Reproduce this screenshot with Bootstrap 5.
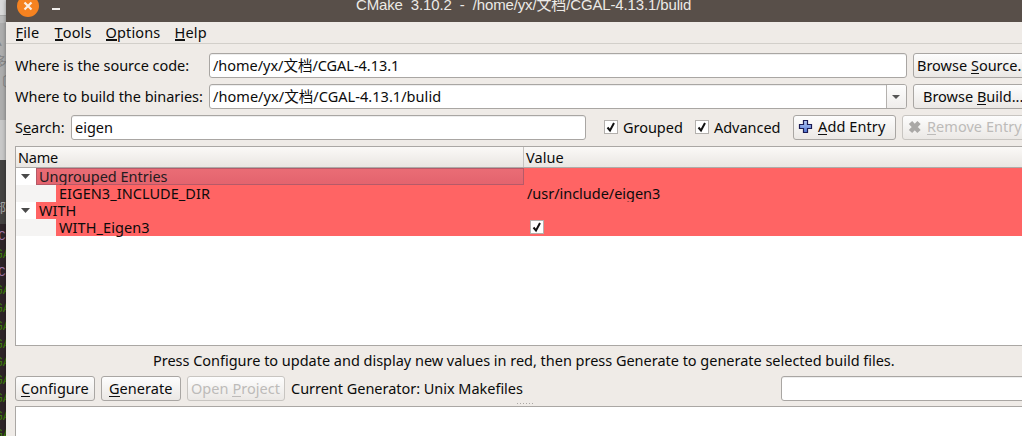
<!DOCTYPE html>
<html lang="zh-CN">
<head>
<meta charset="utf-8">
<title>CMake 3.10.2</title>
<link href="https://cdn.jsdelivr.net/npm/bootstrap@5.3.0/dist/css/bootstrap.min.css" rel="stylesheet">
<script src="https://cdn.jsdelivr.net/npm/bootstrap@5.3.0/dist/js/bootstrap.bundle.min.js"></script>
<style>
body{width:1022px;height:436px;font:14.5px/20px "Noto Sans","Noto Sans CJK SC",sans-serif;letter-spacing:-.03px;color:#0b0b0b;background:#efebe7;white-space:nowrap}
u{text-decoration:none;box-shadow:0 -1px 0 #111 inset;display:inline-block;height:18px;line-height:20px;margin-bottom:-3px;vertical-align:top}
/* desktop visible left of the window */
.desk{width:6px;flex:none;background:#2e2428;font:13px/18px "Liberation Mono","Noto Sans CJK SC",monospace}
.desk-top{height:160px;background:linear-gradient(#d9d9d9 0 15px,#aaa 15px 16px,#bcbcbc 16px 23px,#adadad 23px 120px,#c8c8c8 120px);color:#858585;padding-top:34px}
.desk-top div{height:20px;margin-left:-6px}
.desk-mid{height:68px;background:linear-gradient(#454341 64px,#2e2428 64px);color:#aaa;padding-top:40px}
.desk-mid div{margin-left:-7px}
.desk .g{color:#3d7a0b;margin-left:-5px}
.desk .p{color:#a477a6;margin-left:-2px}
.win{width:1016px;box-shadow:0 0 4px rgba(0,0,0,.4)}
.titlebar{height:22px;background:#584f49;color:#eceae6;font:15px/20px "Liberation Sans","Noto Sans CJK SC",sans-serif;letter-spacing:-.14px;white-space:pre}
.titlebar .cap{margin:-5px 0 0 350px}
.titlebar svg{left:0;top:0}
.menus{height:22px;border-bottom:1px solid #d2cfca;padding-left:9.5px;letter-spacing:.15px}
.menus u{box-shadow:0 -2px 0 #111 inset;height:19px}
.m1{width:39px}.m2{width:51px}.m3{width:69px}
.frm{padding-left:9px}
.frm>*{flex:none}
.frm>div:not(.fld):not(.chk),.frm>span{margin-top:-2px}
.frm>.chk{margin-top:-1px}
.r1{margin-top:9px}.r2{margin-top:6px}
.fld{height:25px;background:#fff;border:1px solid #a9a6a3;border-radius:3px;box-shadow:inset 0 1px #eee;padding-left:3px;line-height:22px}
.b{height:25px;padding:0 0 0 4px;border:1px solid #a9a6a3;border-radius:3px;background:linear-gradient(#fdfdfd,#ebe8e5);font-size:inherit;line-height:21px;color:#0b0b0b;text-align:left}
.b.off{color:#bdbbb9;border-color:#c8c5c1}
.b u{line-height:21px;height:19px}
.b.off u{box-shadow:0 -1px 0 #bdbbb9 inset}
.wide{width:130px;padding-left:3px}.bb{padding-left:9px}
.conf{width:80px;padding-left:5px}.gen{width:80px;padding-left:7px}.proj{width:98px;padding-left:3px}
.add{width:103px}.gap-r{margin-right:6px}
.lab1{width:194px}.lab3{width:56px}
.src{width:698px;margin-right:6px}
.query{width:515px;margin-right:18px}
.drop{width:20px;border-left:1px solid #b4b1ae;background:linear-gradient(#fdfdfd,#efedeb)}
.chk{width:14px;height:14px;background:#fff;border:1px solid #b3b0ad}
.cl{margin-left:5px;width:72px}.cl2{width:79px}
.tree{height:200px;margin:6px 0 0 9px;background:#fff;border:1px solid #aaa7a4;border-right:0}
.thead-q{height:21px;background:linear-gradient(#fbf9f7,#e9e6e2);border-bottom:1px solid #aeaba8;line-height:20px}
.c1{width:508px;flex:none}
.thead-q .c1{border-right:1px solid #c6c3c0;padding-left:2px;letter-spacing:-.2px}
.thead-q .v{padding-left:2px}
.rw{height:17px;line-height:16.500px}
.tw{width:20px;flex:none}
.tw.deep{width:40px;background:#f5f4f3}
.red{background:#ff6464;padding-left:3px}
.red .chk{margin:1px 0 0 3px}
.sel{background:linear-gradient(#ea6d76,#e3636d);box-shadow:inset 0 0 0 1px #b65a68;color:#241c20}
.ls0{letter-spacing:-.02px}.ls1{letter-spacing:.05px}.ls2{letter-spacing:.1px}.ls3{letter-spacing:.08px}
.hint{height:30px;line-height:29px;padding-left:147px;letter-spacing:-.02px}
.cur{width:490px}.prog{width:260px}
.out{height:40px;margin-left:9px;background:#fff;border:1px solid #aaa7a4;border-right:0}
.grip{height:5px;margin-left:510px}
</style>
</head>
<body class="overflow-hidden d-flex">
<div class="desk overflow-hidden">
<div class="desk-top"><div>▲</div><div>多</div><div>〔</div></div>
<div class="desk-mid"><div>部</div></div>
<div class="p">CG</div><div class="g">GA</div><div class="p">CG</div><div class="g">GA</div><div class="g">GA</div><div class="g">GA</div><div class="g">GA</div><div class="g">GA</div><div class="g">GA</div><div class="g">GA</div><div class="g">GA</div><div class="g">GA</div>
</div>
<div class="win flex-shrink-0">
<div class="titlebar position-relative overflow-hidden"><svg class="position-absolute" width="70" height="22"><circle cx="22" cy="6" r="11" fill="#f58220"/><path d="M18.500 2.500l7 7m0-7l-7 7" stroke="#fbefe5" stroke-width="2.200"/><path d="M46 9h8" stroke="#f1efed" stroke-width="2"/></svg><div class="cap">CMake  3.10.2  -  /home/yx/文档/CGAL-4.13.1/bulid</div></div>
<nav class="menus d-flex"><span class="m1"><u>F</u>ile</span><span class="m2"><u>T</u>ools</span><span class="m3"><u>O</u>ptions</span><span><u>H</u>elp</span></nav>
<div class="frm r1 d-flex align-items-center"><div class="lab1">Where is the source code:</div><div class="fld src">/home/yx/文档/CGAL-4.13.1</div><button class="btn b wide">Browse <u>S</u>ource...</button></div>
<div class="frm r2 d-flex align-items-center"><div class="lab1">Where to build the binaries:</div><div class="fld src d-flex justify-content-between overflow-hidden"><span class="ls1">/home/yx/文档/CGAL-4.13.1/bulid</span><span class="drop"><svg class="d-block" width="20" height="23"><path d="M5 10h8l-4 4z" fill="#555"/></svg></span></div><button class="btn b wide bb">Browse <u>B</u>uild...</button></div>
<div class="frm r2 d-flex align-items-center"><div class="lab3">S<u>e</u>arch:</div><div class="fld query ls0">eigen</div>
<div class="chk"><svg class="d-block" width="12" height="12"><path d="M2.500 6.500L5 9.500 9 2" fill="none" stroke="#111" stroke-width="2"/></svg></div><span class="cl">Grouped</span>
<div class="chk"><svg class="d-block" width="12" height="12"><path d="M2.500 6.500L5 9.500 9 2" fill="none" stroke="#111" stroke-width="2"/></svg></div><span class="cl cl2">Advanced</span>
<button class="btn b add gap-r d-flex ls2"><svg width="20" height="23"><defs><linearGradient id="bl" x2="0" y2="1"><stop stop-color="#b9cdf5"/><stop offset="1" stop-color="#5277d5"/></linearGradient></defs><path d="M5.500 4.500h4v4h4v4h-4v4h-4v-4h-4v-4h4z" fill="url(#bl)" stroke="#1a1a55" stroke-width="1.200"/></svg><span><u>A</u>dd Entry</span></button>
<button class="btn b off wide d-flex ls1"><svg width="21" height="23"><path d="M4.500 6.500l8.500 9m0-9l-8.500 9" stroke="#aaa8a6" stroke-width="4.600"/></svg><span><u>R</u>emove Entry</span></button></div>
<div class="tree">
<div class="thead-q d-flex"><div class="c1">Name</div><div class="v ls1">Value</div></div>
<div class="rw d-flex"><div class="c1 d-flex"><div class="tw"><svg class="d-block" width="20" height="17"><path d="M5 6h9l-4.500 5z" fill="#4a4a4a"/></svg></div><div class="red sel flex-fill ls0">Ungrouped Entries</div></div><div class="red flex-fill"></div></div>
<div class="rw d-flex"><div class="c1 d-flex"><div class="tw deep"></div><div class="red flex-fill ls1">EIGEN3_INCLUDE_DIR</div></div><div class="red flex-fill">/usr/include/eigen3</div></div>
<div class="rw d-flex"><div class="c1 d-flex"><div class="tw"><svg class="d-block" width="20" height="17"><path d="M5 6h9l-4.500 5z" fill="#4a4a4a"/></svg></div><div class="red flex-fill ls1">WITH</div></div><div class="red flex-fill"></div></div>
<div class="rw d-flex"><div class="c1 d-flex"><div class="tw deep"></div><div class="red flex-fill ls3">WITH_Eigen3</div></div><div class="red flex-fill"><div class="chk"><svg class="d-block" width="12" height="12"><path d="M2.500 6.500L5 9.500 9 2" fill="none" stroke="#111" stroke-width="2"/></svg></div></div></div>
</div>
<div class="hint">Press Configure to update and display new values in red, then press Generate to generate selected build files.</div>
<div class="frm d-flex align-items-center"><button class="btn b conf gap-r ls1"><u>C</u>onfigure</button><button class="btn b gen gap-r ls1"><u>G</u>enerate</button><button class="btn b off proj gap-r ls1">Open <u>P</u>roject</button><span class="cur">Current Generator: Unix Makefiles</span><div class="fld prog"></div></div>
<div class="grip"><svg class="d-block" width="20" height="5"><path d="M1 2.500h18" stroke="#aaa7a4" stroke-dasharray="1 2"/></svg></div>
<div class="out"></div>
</div>
</body>
</html>
